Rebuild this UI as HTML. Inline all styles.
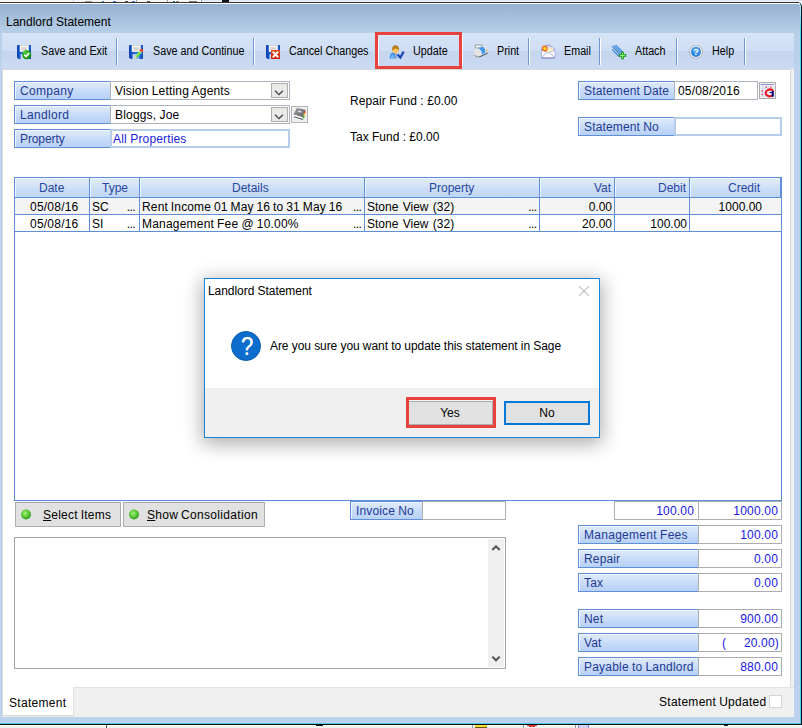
<!DOCTYPE html>
<html>
<head>
<meta charset="utf-8">
<title>Landlord Statement</title>
<style>
html,body{margin:0;padding:0;}
body{width:802px;height:728px;overflow:hidden;position:relative;background:#fff;font-family:"Liberation Sans",sans-serif;font-size:12px;color:#000;}
.a{position:absolute;box-sizing:border-box;}
.t{position:absolute;white-space:nowrap;line-height:14px;}
/* window frame */
#bgtop{left:0;top:0;width:802px;height:10px;background:linear-gradient(#dfe9f5 0,#dfe9f5 1px,#eaf3fb 1px,#e9f0f8 10px);}
#frame{left:-10px;top:2px;width:812px;height:723px;background:#0c0c0c;border-top-right-radius:5px;}
#frame2{left:-10px;top:3px;width:811px;height:721px;background:linear-gradient(#b8f0ff 0,#4ccdf4 30px);border-top-right-radius:4px;}
#frame3{left:-10px;top:3px;width:810px;height:1px;background:#fff;border-top-right-radius:4px;}
#win{left:0;top:4px;width:800px;height:719px;background:#bcd1ec;border-top-right-radius:3px;overflow:hidden;}
#titlebar{left:0;top:0;width:800px;height:66px;background:linear-gradient(#98b2d2 0px,#a0b9d7 8px,#abc5e0 18px,#b7cfe9 29px,#bdd2ec 66px);}
#toolbar{left:2px;top:29px;width:792px;height:36px;background:linear-gradient(#d7e4f6 0px,#cfdef5 17.5px,#c4d5ee 18.5px,#cbdbf2 36px);}
#client{left:2px;top:65px;width:789px;height:647px;background:#fff;border:1px solid #d8d8d8;border-bottom:none;}
#rstrip{left:791px;top:65px;width:3px;height:648px;background:#f0f0f0;}
#bgbot{left:0;top:725px;width:802px;height:3px;background:linear-gradient(#fff 0,#fff 1px,#f0f0f0 1px);}
.sep{width:1px;height:27px;top:34px;background:#6f96d0;box-shadow:1px 0 0 #fbfdff;}
.tb{top:43px;font-size:12.5px;transform-origin:0 50%;transform:scaleX(0.86);line-height:16px;}
.lab{word-spacing:-0.4px;letter-spacing:0.15px;border:1px solid #5f8fd6;background:linear-gradient(#e1ecfc,#c9dcf8 50%,#b7d1f6);box-shadow:inset 1px 1px 0 #eef5ff;color:#1f3a93;height:19px;line-height:19px;padding-left:5px;white-space:nowrap;}
.fld{word-spacing:-0.3px;letter-spacing:0.18px;border:1px solid #adb3bf;background:#fff;height:19px;line-height:19px;white-space:nowrap;}
.fldb{letter-spacing:0.15px;border:2px solid #b5cdea;background:#fff;height:19px;line-height:17px;white-space:nowrap;}
.num{border-color:#adadad;color:#1717e8;text-align:right;padding-right:3px;font-size:12px;}
.btn{border:1px solid #adadad;background:#e1e1e1;}
.th{top:0;height:20px;line-height:19px;color:#28479e;border-right:1px solid #5f8fd6;text-align:center;}
.td{height:17px;line-height:16px;border-right:1px solid #5f8fd6;border-bottom:1px solid #5f8fd6;white-space:nowrap;overflow:hidden;}
</style>
</head>
<body>
<div class="a" id="bgtop"></div>
<div class="a" id="frame"></div>
<div class="a" style="left:0;top:2px;width:797px;height:1px;background:#363636;"></div>
<div class="a" id="frame2"></div>
<div class="a" id="frame3"></div>
<div class="a" id="bgbot"></div>
<div class="a" id="win">
  <div class="a" id="titlebar"></div>
  <div class="a" id="toolbar"></div>
  <div class="a" id="client"></div>
  <div class="a" id="rstrip"></div>
</div>
<!-- background window fragments -->
<div class="a" style="left:0;top:0;width:202px;height:2px;background:#f6f7f9;"></div>
<div class="a" style="left:73px;top:0;width:1px;height:2px;background:#c8d0dc;"></div>
<div class="a" style="left:85px;top:1px;width:7px;height:1px;background:#9a9a9a;"></div>
<div class="a" style="left:102px;top:1px;width:2px;height:1px;background:#3a78d0;"></div>
<div class="a" style="left:113px;top:1px;width:3px;height:1px;background:#3a78d0;"></div>
<div class="a" style="left:125px;top:1px;width:3px;height:1px;background:#555;"></div>
<div class="a" style="left:132px;top:1px;width:3px;height:1px;background:#3a78d0;"></div>
<div class="a" style="left:136px;top:0;width:1px;height:2px;background:#a0a0a0;"></div>
<div class="a" style="left:147px;top:1px;width:3px;height:1px;background:#555;"></div>
<div class="a" style="left:167px;top:0;width:1px;height:2px;background:#a0a0a0;"></div>
<div class="a" style="left:173px;top:1px;width:2px;height:1px;background:#3a78d0;"></div>
<div class="a" style="left:176px;top:1px;width:3px;height:1px;background:#888;"></div>
<div class="a" style="left:189px;top:1px;width:8px;height:1px;background:#777;"></div>
<div class="a" style="left:201px;top:0;width:1px;height:2px;background:#a0a0a0;"></div>
<div class="a" style="left:222px;top:0;width:7px;height:2px;background:#111;"></div>
<div class="a" style="left:105px;top:725px;width:1px;height:3px;background:#fff;"></div>
<div class="a" style="left:106px;top:725px;width:1px;height:3px;background:#555;"></div>
<div class="a" style="left:316px;top:725px;width:7px;height:1px;background:#111;"></div>
<div class="a" style="left:472px;top:725px;width:1px;height:3px;background:#999;"></div>
<div class="a" style="left:475px;top:725px;width:12px;height:2px;background:#f4dc30;border-bottom:1px solid #6a5a10;box-sizing:content-box;"></div>
<div class="a" style="left:523px;top:725px;width:1px;height:3px;background:#999;"></div>
<div class="a" style="left:527px;top:725px;width:10px;height:1px;background:#e03030;"></div>
<div class="a" style="left:529px;top:726px;width:6px;height:1px;background:#e03030;"></div>
<div class="a" style="left:575px;top:725px;width:1px;height:3px;background:#999;"></div>
<div class="a" style="left:578px;top:725px;width:11px;height:3px;background:#d8d0f0;border-left:1px solid #8a80c0;border-right:1px solid #8a80c0;"></div>
<div class="a" style="left:724px;top:725px;width:4px;height:1px;background:#222;"></div>
<!-- title -->
<div class="t" style="left:6px;top:15px;font-size:12px;">Landlord Statement</div>
<!-- toolbar items -->
<div class="t tb" style="left:41px;">Save and Exit</div>
<div class="a sep" style="left:116px;top:38px;"></div>
<div class="t tb" style="left:153px;">Save and Continue</div>
<div class="a sep" style="left:253px;top:38px;"></div>
<div class="t tb" style="left:289px;">Cancel Changes</div>
<div class="t tb" style="left:413px;">Update</div>
<div class="t tb" style="left:497px;">Print</div>
<div class="a sep" style="left:528px;top:38px;"></div>
<div class="t tb" style="left:564px;">Email</div>
<div class="a sep" style="left:599px;top:38px;"></div>
<div class="t tb" style="left:635px;">Attach</div>
<div class="a sep" style="left:676px;top:38px;"></div>
<div class="t tb" style="left:712px;">Help</div>
<div class="a sep" style="left:744px;top:38px;"></div>
<div class="a" style="left:375px;top:32px;width:87px;height:37px;border:3px solid #e8423f;"></div><div class="a" style="left:378px;top:37px;width:1px;height:29px;background:#f4f8fd;"></div><div class="a" style="left:462px;top:35px;width:1px;height:31px;background:#f4f8fd;"></div><div class="a" style="left:378px;top:35px;width:81px;height:1px;background:#e0ebf9;"></div>


<!-- toolbar icons -->
<svg class="a" style="left:17px;top:45px;" width="15" height="15" viewBox="0 0 15 15"><defs><linearGradient id="fga" x1="0" y1="0" x2="1" y2="0"><stop offset="0" stop-color="#0a3fae"/><stop offset="0.5" stop-color="#2f78e6"/><stop offset="1" stop-color="#0d4dbb"/></linearGradient></defs><path d="M0.5 0 H13.5 Q14 0 14 0.5 V13.5 Q14 14 13.5 14 H1.5 L0 12.5 V0.5 Q0 0 0.5 0Z" fill="url(#fga)"/><rect x="2.8" y="0" width="9" height="6.9" fill="#f6f6f4"/><rect x="2.8" y="0" width="9" height="1.1" fill="#d4d4d4"/><rect x="4.5" y="2.7" width="5.5" height="0.8" fill="#a8a8a8"/><rect x="4.5" y="4.6" width="5.5" height="0.8" fill="#b8b8b8"/><rect x="3.6" y="9.2" width="6.6" height="4.8" fill="#cdd9ee"/><rect x="7.6" y="10" width="1.8" height="3.4" fill="#2d6ad8"/><defs><radialGradient id="gc" cx="0.4" cy="0.3" r="0.8"><stop offset="0" stop-color="#52d23a"/><stop offset="0.6" stop-color="#1f9e1a"/><stop offset="1" stop-color="#0c7a10"/></radialGradient></defs><circle cx="9.7" cy="9.7" r="4.6" fill="url(#gc)"/><path d="M7.3 9.8 L9 11.5 L12.2 8.1" fill="none" stroke="#fff" stroke-width="1.6"/></svg>
<svg class="a" style="left:129px;top:45px;" width="15" height="15" viewBox="0 0 15 15"><defs><linearGradient id="fgb" x1="0" y1="0" x2="1" y2="0"><stop offset="0" stop-color="#0a3fae"/><stop offset="0.5" stop-color="#2f78e6"/><stop offset="1" stop-color="#0d4dbb"/></linearGradient></defs><path d="M0.5 0 H13.5 Q14 0 14 0.5 V13.5 Q14 14 13.5 14 H1.5 L0 12.5 V0.5 Q0 0 0.5 0Z" fill="url(#fgb)"/><rect x="2.8" y="0" width="9" height="6.9" fill="#f6f6f4"/><rect x="2.8" y="0" width="9" height="1.1" fill="#d4d4d4"/><rect x="4.5" y="2.7" width="5.5" height="0.8" fill="#a8a8a8"/><rect x="4.5" y="4.6" width="5.5" height="0.8" fill="#b8b8b8"/><rect x="3.6" y="9.2" width="6.6" height="4.8" fill="#cdd9ee"/><rect x="7.6" y="10" width="1.8" height="3.4" fill="#2d6ad8"/><path d="M5.4 13.4 L6.3 11 L11 5.8 L13 7.6 L8.2 12.8 Z" fill="#5fd838"/><path d="M6.3 11 L11 5.8 L11.9 6.6 L7.1 11.8Z" fill="#9af070"/><path d="M5.4 13.4 L6.3 11 L8.2 12.8Z" fill="#f0e0c0"/><circle cx="12.4" cy="5.6" r="1.8" fill="#e8482a"/><path d="M10.6 6.1 L12.7 8" stroke="#e8e8e8" stroke-width="0.9"/></svg>
<svg class="a" style="left:266px;top:45px;" width="15" height="15" viewBox="0 0 15 15"><defs><linearGradient id="fgc" x1="0" y1="0" x2="1" y2="0"><stop offset="0" stop-color="#0a3fae"/><stop offset="0.5" stop-color="#2f78e6"/><stop offset="1" stop-color="#0d4dbb"/></linearGradient></defs><path d="M0.5 0 H13.5 Q14 0 14 0.5 V13.5 Q14 14 13.5 14 H1.5 L0 12.5 V0.5 Q0 0 0.5 0Z" fill="url(#fgc)"/><rect x="2.8" y="0" width="9" height="6.9" fill="#f6f6f4"/><rect x="2.8" y="0" width="9" height="1.1" fill="#d4d4d4"/><rect x="4.5" y="2.7" width="5.5" height="0.8" fill="#a8a8a8"/><rect x="4.5" y="4.6" width="5.5" height="0.8" fill="#b8b8b8"/><rect x="3.6" y="9.2" width="6.6" height="4.8" fill="#cdd9ee"/><rect x="7.6" y="10" width="1.8" height="3.4" fill="#2d6ad8"/><defs><linearGradient id="rg" x1="0" y1="0" x2="0" y2="1"><stop offset="0" stop-color="#ee4a1c"/><stop offset="1" stop-color="#c81808"/></linearGradient></defs><rect x="5" y="5" width="9" height="9" rx="0.8" fill="url(#rg)"/><path d="M7.3 7.3 L11.7 11.7 M11.7 7.3 L7.3 11.7" stroke="#fff" stroke-width="2" stroke-linecap="round"/></svg>
<svg class="a" style="left:389px;top:44px;" width="17" height="16" viewBox="0 0 17 16"><path d="M0.8 14.6 Q0.6 9.2 4.2 8.6 L8 8.6 L8.3 14.6 Z" fill="#3a8ee6"/><path d="M1.6 14.6 Q1.6 11 4 10 L5.4 14.6Z" fill="#7ab8f4"/><path d="M6.3 8.6 L7.2 8.6 L7.6 14 L6.7 14.6Z" fill="#f8c8c0"/><ellipse cx="6.5" cy="5.9" rx="3.1" ry="3.4" fill="#ffc266"/><path d="M3.3 7.2 Q2.4 1.4 6.6 1.3 Q10.6 1.4 9.8 7 Q9.4 4.4 7 4.4 Q4.2 4.4 3.3 7.2Z" fill="#b57c12"/><path d="M8.7 10.6 L11.3 13.5 L14.7 7.6" fill="none" stroke="#1848b4" stroke-width="2.3" stroke-linejoin="miter"/></svg>
<svg class="a" style="left:474px;top:44px;" width="15" height="15" viewBox="0 0 15 15"><rect x="1.2" y="1" width="6.6" height="3" fill="#f2fbff" stroke="#8a8a8a" stroke-width="0.8"/><path d="M0.3 6 Q0.3 4.6 2 4.6 L5 4.6 Q6.8 5.6 7.4 8 L7.4 11.6 L4.4 12.8 L0.3 10.8Z" fill="#e4e4e4"/><path d="M4 3.8 L9.6 3 Q11.8 5 11.6 8.6 L8 10.2 Q7.8 5.8 4 3.8Z" fill="#3c98ea"/><path d="M9.6 3 L12 3.6 Q14 5 13.8 8.4 L11.6 8.6 Q11.8 5 9.6 3Z" fill="#e0e0e0"/><rect x="12.1" y="5.8" width="1.2" height="1.4" fill="#f0a020"/><path d="M7.4 11.6 L13.8 8.4 L13.8 9.6 L7.6 12.6 L4.4 13.4 L4.4 12.8Z" fill="#4a4a4a"/><path d="M0.3 10.8 L4.4 12.8 L4.4 13.6 L2 13 L0.3 11.6Z" fill="#9a9a9a"/></svg>
<svg class="a" style="left:541px;top:44px;" width="15" height="15" viewBox="0 0 15 15"><path d="M0.5 5 L5.5 1.2 L8.8 1.2 L13.8 5 L13.8 14 L0.5 14Z" fill="#d4d4f4" stroke="#9494d4" stroke-width="0.9"/><rect x="5" y="3.6" width="7.2" height="4.8" fill="#fff4b8"/><rect x="5" y="3.6" width="7.2" height="1.2" fill="#e8e0d0"/><path d="M0.7 6.2 L7.2 8.8 L13.6 6.2 L13.6 13.7 L0.7 13.7Z" fill="#fbfbff"/><path d="M0.9 13.5 L5.4 8.6 M13.4 13.5 L9 8.6 M0.7 6.2 L7.2 8.8 L13.6 6.2" fill="none" stroke="#a4a4dc" stroke-width="0.8"/><path d="M0.5 13.9 L13.8 13.9" stroke="#8484c8" stroke-width="1"/><circle cx="3.8" cy="4.4" r="2.9" fill="#f0642a"/><circle cx="3.8" cy="4.4" r="1.7" fill="#ffe020"/></svg>
<svg class="a" style="left:611px;top:44px;" width="16" height="16" viewBox="0 0 16 16"><g fill="none" stroke="#3f8fe4" stroke-width="1.3" stroke-linecap="round"><path d="M1.4 2.6 L9.6 11"/><path d="M3 1.6 L11 9.6"/><path d="M5 1.4 L11.6 8"/><path d="M1.4 5.6 L7.6 12"/></g><path d="M3 3.4 L8.6 9" stroke="#6a6a6a" stroke-width="0.6"/><path d="M10.2 7.8 H12.8 V10.2 H15.2 V12.8 H12.8 V15.2 H10.2 V12.8 H7.8 V10.2 H10.2Z" fill="#0e8a0e"/><path d="M10.9 8.8 H12.1 V10.9 H14.2 V12.1 H12.1 V14.2 H10.9 V12.1 H8.8 V10.9 H10.9Z" fill="#8af468"/></svg>
<svg class="a" style="left:689px;top:44px;" width="15" height="16" viewBox="0 0 15 16"><defs><radialGradient id="hg" cx="0.5" cy="0.3" r="0.8"><stop offset="0" stop-color="#56a8f4"/><stop offset="1" stop-color="#1c74d8"/></radialGradient></defs><circle cx="7" cy="7.8" r="6.9" fill="#a8a8a8"/><circle cx="7" cy="7.8" r="6.2" fill="#f2f2f2"/><circle cx="7" cy="7.8" r="5.1" fill="url(#hg)"/><text x="7" y="11.4" text-anchor="middle" font-family="Liberation Sans, sans-serif" font-weight="bold" font-size="9.5" fill="#fff">?</text></svg>
<!-- form top -->
<div class="a lab" style="left:14px;top:81px;width:97px;letter-spacing:0.3px;">Company</div>
<div class="a fld" style="left:110px;top:81px;width:180px;padding-left:4px;">Vision Letting Agents</div>
<div class="a lab" style="left:14px;top:105px;width:97px;letter-spacing:0.33px;">Landlord</div>
<div class="a fld" style="left:110px;top:105px;width:180px;padding-left:4px;">Bloggs, Joe</div>
<div class="a lab" style="left:14px;top:129px;width:97px;letter-spacing:-0.1px;">Property</div>
<div class="a fldb" style="left:110px;top:129px;width:180px;padding-left:1px;color:#1c1ce0;">All Properties</div>
<!-- combo buttons -->
<div class="a" style="left:271px;top:83px;width:17px;height:15px;border:1px solid #adadad;background:#e9e9e9;"><svg width="15" height="13" style="position:absolute;left:0;top:0"><path d="M3.1 6.7 L7 10.6 L10.9 6.7" fill="none" stroke="#404040" stroke-width="1.25"/></svg></div>
<div class="a" style="left:271px;top:107px;width:17px;height:15px;border:1px solid #adadad;background:#e9e9e9;"><svg width="15" height="13" style="position:absolute;left:0;top:0"><path d="M3.1 6.7 L7 10.6 L10.9 6.7" fill="none" stroke="#404040" stroke-width="1.25"/></svg></div>
<!-- book icon -->
<div class="a" style="left:291px;top:106px;width:17px;height:17px;border:1px solid #b4b4b4;background:#efefef;"><svg width="17" height="17" viewBox="0 0 17 17" style="position:absolute;left:-1px;top:-1px"><defs><linearGradient id="bk" x1="0" y1="0" x2="1" y2="1"><stop offset="0" stop-color="#9a9ea2"/><stop offset="1" stop-color="#5e6266"/></linearGradient></defs><path d="M2.5 8.6 L5.8 2 L14.6 3.8 L12.2 11.6Z" fill="url(#bk)"/><path d="M7.4 4.6 L10.6 5.3 L10.2 6.6 L7 5.9Z" fill="#e8e8e8"/><path d="M2.5 8.6 L12.2 11.6 L12.1 13.1 L2.8 10.3Z" fill="#fafafa"/><path d="M2.8 10.3 L12.1 13.1 L12 14 L3.1 11.2Z" fill="#505458"/><path d="M13.4 5 L14.8 5.3 L14.3 7.4 L12.9 7.1Z" fill="#e8402c"/><path d="M12.8 7.5 L14.2 7.8 L13.7 9.9 L12.3 9.6Z" fill="#f0c010"/><path d="M12.2 10 L13.6 10.3 L13.1 12.4 L11.7 12.1Z" fill="#30b030"/></svg></div>
<!-- funds -->
<div class="t" style="left:350px;top:94px;letter-spacing:0.08px;">Repair Fund : £0.00</div>
<div class="t" style="left:350px;top:130px;">Tax Fund : £0.00</div>
<!-- statement date / no -->
<div class="a lab" style="left:578px;top:81px;width:97px;">Statement Date</div>
<div class="a fld" style="left:674px;top:81px;width:84px;padding-left:3px;">05/08/2016</div>
<div class="a" style="left:759px;top:82px;width:17px;height:17px;border:1px solid #ababab;background:#f1efeb;"><svg width="15" height="15" viewBox="0 0 15 15" style="position:absolute;left:0;top:0"><rect x="0.6" y="0.8" width="13.2" height="13.4" fill="#e9edf9"/><rect x="0.6" y="1" width="13.2" height="0.8" fill="#7a7ad2"/><g stroke="#c4cce0" stroke-width="0.5"><path d="M0.6 5.4H13.8M0.6 9.6H13.8M0.6 12.8H13.8M3.2 2V14M8 2V14"/></g><g fill="#e8283c"><rect x="5.5" y="3.4" width="1.2" height="1.5"/><rect x="10.4" y="3.4" width="1.2" height="1.5"/><rect x="1.6" y="7" width="1.2" height="1.5"/><rect x="1.6" y="10.8" width="1.4" height="1.2"/></g><path d="M13.3 7.9 A4.2 3.3 0 1 0 12.6 12.4" fill="none" stroke="#f0141c" stroke-width="2"/><path d="M11.7 8 H13.8 V13.7 H11.7 V10 H9.8 V9.1 H11.7Z" fill="#0a0a7a"/></svg></div>
<div class="a lab" style="left:578px;top:117px;width:97px;">Statement No</div>
<div class="a fldb" style="left:674px;top:117px;width:108px;"></div>

<!-- grid -->
<div class="a" style="left:14px;top:177px;width:768px;height:324px;border:1px solid #5f8fd6;background:#fff;"></div>
<div class="a" style="left:15px;top:178px;width:766px;height:20px;background:linear-gradient(#e3edfb,#cfe0f8 50%,#bdd5f6);border-bottom:1px solid #5f8fd6;box-shadow:inset 1px 1px 0 #f0f6ff;"></div><div class="a" style="left:90px;top:179px;width:1px;height:18px;background:#edf4fe;"></div><div class="a" style="left:140px;top:179px;width:1px;height:18px;background:#edf4fe;"></div><div class="a" style="left:365px;top:179px;width:1px;height:18px;background:#edf4fe;"></div><div class="a" style="left:540px;top:179px;width:1px;height:18px;background:#edf4fe;"></div><div class="a" style="left:615px;top:179px;width:1px;height:18px;background:#edf4fe;"></div><div class="a" style="left:690px;top:179px;width:1px;height:18px;background:#edf4fe;"></div>
<div class="a" style="left:15px;top:198px;width:766px;height:16px;background:#f4f4f4;"></div>
<!-- vertical lines -->
<div class="a" style="left:89px;top:178px;width:1px;height:54px;background:#5f8fd6;"></div>
<div class="a" style="left:139px;top:178px;width:1px;height:54px;background:#5f8fd6;"></div>
<div class="a" style="left:364px;top:178px;width:1px;height:54px;background:#5f8fd6;"></div>
<div class="a" style="left:539px;top:178px;width:1px;height:54px;background:#5f8fd6;"></div>
<div class="a" style="left:614px;top:178px;width:1px;height:54px;background:#5f8fd6;"></div>
<div class="a" style="left:689px;top:178px;width:1px;height:54px;background:#5f8fd6;"></div>
<div class="a" style="left:780px;top:178px;width:1px;height:20px;background:#5f8fd6;"></div>
<!-- horizontal lines -->
<div class="a" style="left:15px;top:214px;width:766px;height:1px;background:#5f8fd6;"></div>
<div class="a" style="left:15px;top:231px;width:766px;height:1px;background:#5f8fd6;"></div>
<!-- header text -->
<div class="t" style="left:39px;top:181px;color:#28479e;">Date</div>
<div class="t" style="left:102px;top:181px;color:#28479e;">Type</div>
<div class="t" style="left:232px;top:181px;color:#28479e;">Details</div>
<div class="t" style="left:429px;top:181px;color:#28479e;">Property</div>
<div class="t" style="right:191px;top:181px;color:#28479e;">Vat</div>
<div class="t" style="right:116px;top:181px;color:#28479e;">Debit</div>
<div class="t" style="left:728px;top:181px;color:#28479e;">Credit</div>
<!-- row 1 -->
<div class="t" style="left:30px;top:200px;letter-spacing:0.22px;">05/08/16</div>
<div class="t" style="left:92px;top:200px;">SC</div>
<div class="t" style="left:126.7px;top:200px;letter-spacing:-0.6px;">...</div>
<div class="t" style="left:142px;top:200px;letter-spacing:0.15px;word-spacing:-0.6px;">Rent Income 01 May 16 to 31 May 16</div>
<div class="t" style="left:353px;top:200px;letter-spacing:-0.6px;">...</div>
<div class="t" style="left:367px;top:200px;word-spacing:1px;">Stone View (32)</div>
<div class="t" style="left:528.2px;top:200px;letter-spacing:-0.6px;">...</div>
<div class="t" style="right:190px;top:200px;">0.00</div>
<div class="t" style="right:40px;top:200px;">1000.00</div>
<!-- row 2 -->
<div class="t" style="left:30px;top:217px;letter-spacing:0.22px;">05/08/16</div>
<div class="t" style="left:92px;top:217px;">SI</div>
<div class="t" style="left:126.7px;top:217px;letter-spacing:-0.6px;">...</div>
<div class="t" style="left:142px;top:217px;letter-spacing:0.2px;word-spacing:-0.5px;">Management Fee @ 10.00%</div>
<div class="t" style="left:353px;top:217px;letter-spacing:-0.6px;">...</div>
<div class="t" style="left:367px;top:217px;word-spacing:1px;">Stone View (32)</div>
<div class="t" style="left:528.2px;top:217px;letter-spacing:-0.6px;">...</div>
<div class="t" style="right:190px;top:217px;">20.00</div>
<div class="t" style="right:115px;top:217px;">100.00</div>
<!-- buttons below grid -->
<div class="a btn" style="left:15px;top:502px;width:106px;height:25px;"></div>
<svg class="a" style="left:20px;top:508px;" width="13" height="13"><defs><radialGradient id="gd20" cx="0.42" cy="0.38" r="0.62"><stop offset="0" stop-color="#a8ee7c"/><stop offset="0.55" stop-color="#5ccc38"/><stop offset="1" stop-color="#359a1e"/></radialGradient></defs><circle cx="6" cy="6.5" r="5" fill="url(#gd20)"/></svg>
<div class="t" style="left:43px;top:508px;word-spacing:-0.8px;letter-spacing:0.25px;"><u>S</u>elect Items</div>
<div class="a btn" style="left:123px;top:502px;width:142px;height:25px;"></div>
<svg class="a" style="left:128px;top:508px;" width="13" height="13"><defs><radialGradient id="gd128" cx="0.42" cy="0.38" r="0.62"><stop offset="0" stop-color="#a8ee7c"/><stop offset="0.55" stop-color="#5ccc38"/><stop offset="1" stop-color="#359a1e"/></radialGradient></defs><circle cx="6" cy="6.5" r="5" fill="url(#gd128)"/></svg>
<div class="t" style="left:147px;top:508px;word-spacing:-0.9px;letter-spacing:0.32px;"><u>S</u>how Consolidation</div>
<!-- invoice no -->
<div class="a lab" style="left:350px;top:501px;width:73px;">Invoice No</div>
<div class="a fld" style="left:422px;top:501px;width:84px;border-color:#adadad;"></div>
<!-- textarea -->
<div class="a" style="left:14px;top:537px;width:492px;height:132px;border:1px solid #a5a5a5;background:#fff;"></div>
<div class="a" style="left:488px;top:539px;width:16px;height:128px;background:#f0f0f0;"></div>
<svg class="a" style="left:488px;top:538px;" width="17" height="130"><path d="M4.3 12 L8 8.3 L11.7 12" fill="none" stroke="#505050" stroke-width="2"/><path d="M4.3 118.6 L8 122.3 L11.7 118.6" fill="none" stroke="#505050" stroke-width="2"/></svg>
<!-- totals -->
<div class="a fld num" style="left:614px;top:501px;width:85px;padding-right:4px;">100.00</div>
<div class="a fld num" style="left:698px;top:501px;width:84px;">1000.00</div>
<div class="a lab" style="left:578px;top:525px;width:121px;letter-spacing:0.28px;">Management Fees</div>
<div class="a fld num" style="left:698px;top:525px;width:84px;">100.00</div>
<div class="a lab" style="left:578px;top:549px;width:121px;">Repair</div>
<div class="a fld num" style="left:698px;top:549px;width:84px;">0.00</div>
<div class="a lab" style="left:578px;top:573px;width:121px;">Tax</div>
<div class="a fld num" style="left:698px;top:573px;width:84px;">0.00</div>
<div class="a lab" style="left:578px;top:609px;width:121px;">Net</div>
<div class="a fld num" style="left:698px;top:609px;width:84px;">900.00</div>
<div class="a lab" style="left:578px;top:633px;width:121px;">Vat</div>
<div class="a fld num" style="left:698px;top:633px;width:84px;padding-right:2px;"><span style="position:absolute;left:23px;">(</span>20.00)</div>
<div class="a lab" style="left:578px;top:657px;width:121px;letter-spacing:0.2px;">Payable to Landlord</div>
<div class="a fld num" style="left:698px;top:657px;width:84px;">880.00</div>
<!-- bottom tab strip -->
<div class="a" style="left:73px;top:687px;width:721px;height:30px;background:#f0f0f0;border-top:1px solid #e2e2e2;border-left:1px solid #e2e2e2;"></div>
<div class="a" style="left:2px;top:715px;width:72px;height:1px;background:#d8d8d8;"></div><div class="a" style="left:2px;top:716px;width:72px;height:1px;background:#ececec;"></div>
<div class="t" style="left:9px;top:696px;letter-spacing:0.3px;">Statement</div>
<div class="t" style="left:659px;top:695px;word-spacing:-0.6px;letter-spacing:0.27px;">Statement Updated</div>
<div class="a" style="left:769px;top:695px;width:13px;height:13px;border:1px solid #d4d4d4;background:#fff;"></div>

<!-- dialog -->
<div class="a" style="left:204px;top:278px;width:396px;height:160px;border:1px solid #1883d7;background:#fff;box-shadow:0 4px 18px 2px rgba(0,0,0,0.32);"></div>
<div class="a" style="left:205px;top:388px;width:394px;height:49px;background:#f0f0f0;"></div>
<div class="t" style="left:208px;top:284px;font-size:12px;letter-spacing:-0.05px;">Landlord Statement</div>
<svg class="a" style="left:578px;top:285px;" width="12" height="12"><path d="M1 1 L11 11 M11 1 L1 11" stroke="#c4c4c4" stroke-width="1.1" fill="none"/></svg>
<div class="a" style="left:231px;top:331px;width:30px;height:30px;border-radius:50%;background:#0c6dcd;border:1px solid #0a5db2;"></div>
<div class="t" style="left:231.8px;top:333px;width:30px;text-align:center;color:#fff;font-size:25px;line-height:26px;transform:scaleX(0.88);text-shadow:0 0 0.6px #fff;">?</div>
<div class="t" style="left:270px;top:339px;font-size:12px;letter-spacing:-0.07px;">Are you sure you want to update this statement in Sage</div>
<div class="a" style="left:407px;top:401px;width:86px;height:24px;border:1px solid #adadad;background:#e1e1e1;"></div>
<div class="a" style="left:409px;top:400px;width:84px;height:1px;background:#eef3f3;"></div>
<div class="a" style="left:406px;top:397px;width:90px;height:31px;border:3px solid #e8423f;"></div>
<div class="t" style="left:407px;top:406px;width:86px;text-align:center;font-size:12px;">Yes</div>
<div class="a" style="left:504px;top:401px;width:86px;height:24px;border:2px solid #0078d7;background:#e1e1e1;"></div>
<div class="t" style="left:504px;top:406px;width:86px;text-align:center;font-size:12px;">No</div>
</body>
</html>
